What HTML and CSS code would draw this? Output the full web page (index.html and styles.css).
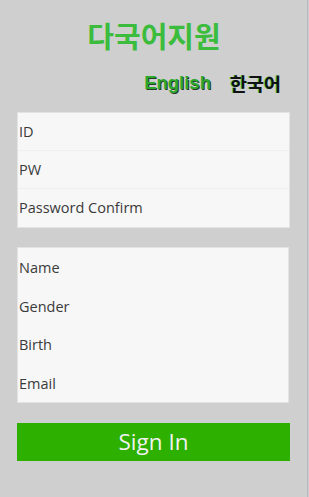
FILE: index.html
```html
<!DOCTYPE html>
<html>
<head>
<meta charset="utf-8">
<link rel="stylesheet" href="styles.css">
</head>
<body>
<div class="page">
  <h1 class="title">다국어지원</h1>
  <div class="langs">
    <span class="lang en">English</span>
    <span class="lang ko">한국어</span>
  </div>
  <div class="card">
    <div class="row">ID</div>
    <div class="row">PW</div>
    <div class="row">Password Confirm</div>
  </div>
  <div class="card card2">
    <div class="row">Name</div>
    <div class="row">Gender</div>
    <div class="row">Birth</div>
    <div class="row">Email</div>
  </div>
  <div class="btn">Sign In</div>
</div>
</body>
</html>
```
FILE: styles.css
```css
html, body {
  margin: 0;
  padding: 0;
  background: #cfcfcf;
}
.page {
  width: 308px;
  height: 497px;
  box-sizing: border-box;
  border-right: 1px solid #b3b8c2;
  background: #cfcfcf;
  font-family: "Open Sans", "Liberation Sans", Arial, sans-serif;
  padding-top: 16px;
}
.title {
  margin: 0;
  text-align: center;
  font-family: "Noto Sans CJK KR", sans-serif;
  font-weight: 700;
  font-size: 29px;
  line-height: 38px;
  color: #3cbc3c;
  padding-left: 1px;
}
.langs {
  display: flex;
  justify-content: flex-end;
  gap: 19px;
  padding-right: 26px;
  margin-top: 16px;
  height: 26px;
  align-items: center;
}
.lang {
  font-family: "Noto Sans CJK KR", sans-serif;
  font-weight: 700;
  font-size: 18.5px;
  line-height: 22px;
}
.en {
  color: #2ca82c;
  text-shadow: 1px 1px 0 #2a3a2a;
  font-family: "Liberation Sans", Arial, sans-serif;
  font-size: 18.5px;
}
.ko {
  color: #111;
  text-shadow: -1px 0 0 #3ac23a;
}
.card {
  margin: 17px 0 0 18px;
  width: 271px;
  background: #f7f7f7;
  box-shadow: 0 0 0 1px #e3e3e3;
}
.card2 {
  margin-top: 21px;
  width: 270px;
  height: 154px;
}
.row {
  height: 38px;
  line-height: 38px;
  padding-left: 1px;
  font-size: 14.5px;
  color: #3a3a3a;
  border-bottom: 1px solid #efefef;
  box-sizing: border-box;
}
.card .row:last-child { border-bottom: none; }
.card2 .row { height: 38.5px; line-height: 40px; border-bottom: none; }
.btn {
  margin: 21px 0 0 17px;
  width: 273px;
  height: 38px;
  background: #2db000;
  color: #f2f2f2;
  font-size: 22.5px;
  line-height: 38px;
  text-align: center;
}
```
